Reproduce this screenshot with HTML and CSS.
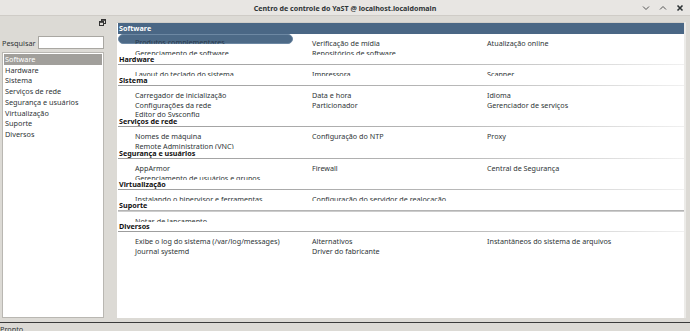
FILE: index.html
```html
<!DOCTYPE html>
<html lang="pt">
<head>
<meta charset="utf-8">
<title>Centro de controle do YaST</title>
<link rel="stylesheet" href="styles.css">
</head>
<body>
<div class="window">
  <header class="titlebar">
    <span class="title">Centro de controle do YaST @ localhost.localdomain</span>
    <div class="wbtns">
      <svg class="wbtn" width="8" height="8" viewBox="0 0 8 8"><path d="M1 2.5 L4 5.5 L7 2.5" fill="none" stroke="#555" stroke-width="1"/></svg>
      <svg class="wbtn" width="8" height="8" viewBox="0 0 8 8"><path d="M1 5.5 L4 2.5 L7 5.5" fill="none" stroke="#555" stroke-width="1"/></svg>
      <svg class="wbtn" width="8" height="8" viewBox="0 0 8 8"><path d="M1.5 1.5 L6.5 6.5 M6.5 1.5 L1.5 6.5" fill="none" stroke="#2e3436" stroke-width="1.6"/></svg>
    </div>
  </header>
  <main class="main">
    <aside class="side">
      <div class="dockrow">
        <svg width="7" height="7" viewBox="0 0 7 7"><rect x="2.5" y="0.5" width="4" height="4" fill="none" stroke="#333"/><rect x="2.5" y="0.5" width="4" height="1.3" fill="#333"/><rect x="0.5" y="2.5" width="4" height="4" fill="#dcdad5" stroke="#333"/><rect x="0.5" y="2.5" width="4" height="1.3" fill="#333"/></svg>
      </div>
      <div class="search">
        <label class="slabel">Pesquisar</label>
        <div class="sinput"></div>
      </div>
      <ul class="catlist">
        <li class="cat sel">Software</li>
        <li class="cat">Hardware</li>
        <li class="cat">Sistema</li>
        <li class="cat">Serviços de rede</li>
        <li class="cat">Segurança e usuários</li>
        <li class="cat">Virtualização</li>
        <li class="cat">Suporte</li>
        <li class="cat">Diversos</li>
      </ul>
    </aside>
    <section class="panel">
      <div class="group g-software">
        <div class="ghead blue">Software</div>
        <div class="items first">
          <div class="item hl"><span class="hltext">Produtos complementares</span></div>
          <div class="item">Verificação de mídia</div>
          <div class="item">Atualização online</div>
          <div class="item">Gerenciamento de software</div>
          <div class="item">Repositórios de software</div>
        </div>
      </div>
      <div class="group g1">
        <div class="ghead">Hardware</div>
        <div class="rule"></div>
        <div class="items">
          <div class="item">Layout do teclado do sistema</div>
          <div class="item">Impressora</div>
          <div class="item">Scanner</div>
        </div>
      </div>
      <div class="group g3">
        <div class="ghead">Sistema</div>
        <div class="rule"></div>
        <div class="items">
          <div class="item">Carregador de inicialização</div>
          <div class="item">Data e hora</div>
          <div class="item">Idioma</div>
          <div class="item">Configurações da rede</div>
          <div class="item">Particionador</div>
          <div class="item">Gerenciador de serviços</div>
          <div class="item">Editor do Sysconfig</div>
        </div>
      </div>
      <div class="group g2">
        <div class="ghead">Serviços de rede</div>
        <div class="rule"></div>
        <div class="items">
          <div class="item">Nomes de máquina</div>
          <div class="item">Configuração do NTP</div>
          <div class="item">Proxy</div>
          <div class="item">Remote Administration (VNC)</div>
        </div>
      </div>
      <div class="group g2b">
        <div class="ghead">Segurança e usuários</div>
        <div class="rule"></div>
        <div class="items">
          <div class="item">AppArmor</div>
          <div class="item">Firewall</div>
          <div class="item">Central de Segurança</div>
          <div class="item">Gerenciamento de usuários e grupos</div>
        </div>
      </div>
      <div class="group g1">
        <div class="ghead">Virtualização</div>
        <div class="rule"></div>
        <div class="items">
          <div class="item">Instalando o hipervisor e ferramentas</div>
          <div class="item">Configuração do servidor de realocação</div>
        </div>
      </div>
      <div class="group g1">
        <div class="ghead">Suporte</div>
        <div class="rule thick"></div>
        <div class="items">
          <div class="item">Notas de lançamento</div>
        </div>
      </div>
      <div class="group glast">
        <div class="ghead">Diversos</div>
        <div class="rule"></div>
        <div class="items">
          <div class="item">Exibe o log do sistema (/var/log/messages)</div>
          <div class="item">Alternativos</div>
          <div class="item">Instantâneos do sistema de arquivos</div>
          <div class="item">Journal systemd</div>
          <div class="item">Driver do fabricante</div>
        </div>
      </div>
    </section>
  </main>
  <footer class="status">Pronto</footer>
</div>
</body>
</html>
```
FILE: styles.css
```css
html, body {
  margin: 0;
  padding: 0;
}
body {
  width: 690px;
  height: 331px;
  overflow: hidden;
  background: #dcdad5;
  font-family: "Noto Sans", "Open Sans", sans-serif;
  color: #2e3436;
}
.window {
  display: flex;
  flex-direction: column;
  height: 331px;
}
.titlebar {
  height: 16px;
  flex: none;
  box-sizing: border-box;
  background: #e8e6e3;
  border-bottom: 1px solid #cfccc7;
  display: flex;
  align-items: center;
  justify-content: center;
  position: relative;
}
.title {
  font-weight: bold;
  font-size: 7.1px;
  color: #2e3436;
}
.wbtns {
  position: absolute;
  right: 6px;
  top: 4px;
  display: flex;
  gap: 9px;
}
.wbtn {
  display: block;
}
.main {
  flex: none;
  height: 306px;
  display: flex;
  box-sizing: border-box;
  padding: 0 3px 0 2px;
  gap: 13px;
}
.side {
  width: 102px;
  flex: none;
  display: flex;
  flex-direction: column;
}
.dockrow {
  height: 20px;
  display: flex;
  justify-content: flex-end;
  align-items: flex-start;
  padding-top: 2px;
  box-sizing: border-box;
}
.dockrow svg {
  display: block;
  margin-right: -2px;
  margin-top: 1px;
}
.search {
  display: flex;
  align-items: center;
  height: 13px;
  gap: 2px;
}
.slabel {
  font-size: 7.3px;
  color: #2e3436;
  padding-top: 1px;
}
.sinput {
  flex: 1;
  height: 13px;
  box-sizing: border-box;
  background: #fff;
  border: 1px solid #a9a7a2;
}
.catlist {
  list-style: none;
  margin: 3px 0 0 0;
  padding: 1px;
  height: 266px;
  box-sizing: border-box;
  background: #fff;
  border: 1px solid #b9b7b2;
}
.cat {
  font-size: 7.3px;
  line-height: 10.7px;
  padding-left: 1px;
  color: #2e3436;
}
.cat.sel {
  background: #a19f9b;
  color: #fff;
}
.panel {
  width: 567px;
  flex: none;
  margin-top: 6px;
  height: 296px;
  box-sizing: border-box;
  background: #fff;
  border-top: 1px solid #d0cec9;
  padding-left: 1px;
  display: flex;
  flex-direction: column;
  overflow: hidden;
  position: relative;
  box-shadow: 2px 0 0 #ecebe8;
}
.group {
  overflow: hidden;
  flex: none;
}
.g-software { height: 32px; }
.g1 { height: 21px; }
.g2 { height: 32px; }
.g2b { height: 31px; }
.g3 { height: 41px; }
.glast { flex: 1; }
.ghead {
  height: 9px;
  line-height: 9px;
  font-size: 7.2px;
  font-weight: bold;
  color: #111;
  padding-left: 1px;
}
.ghead.blue {
  height: 11px;
  line-height: 11px;
  background: #4a6785;
  color: #fff;
}
.rule {
  height: 1px;
  background: linear-gradient(to right, #9c9c9c, #b8b8b8 60%, #f0f0f0);
}
.rule.thick {
  height: 2px;
  background: linear-gradient(to bottom, #a8a8a8, #d8d8d8);
}
.items {
  display: grid;
  grid-template-columns: 177px 175px 1fr;
  padding-left: 17px;
  padding-top: 5px;
}
.item {
  font-size: 7.2px;
  line-height: 9.6px;
  white-space: nowrap;
  color: #2e3436;
}
.item.hl {
  position: relative;
  height: 9.6px;
}
.item.hl::before {
  content: "";
  position: absolute;
  left: -17px;
  top: -5px;
  width: 173px;
  height: 8px;
  border-radius: 5px;
  background: #4d6a87;
  border: 1px solid #6d88a3;
}
.hltext {
  position: relative;
  display: block;
  height: 6px;
  margin-top: -1px;
  overflow: hidden;
  color: #2a3a4c;
}
.status {
  flex: none;
  border-top: 1px solid #3a3a3a;
  font-size: 7.3px;
  line-height: 9px;
  padding-top: 2px;
  color: #2e3436;
}
```
